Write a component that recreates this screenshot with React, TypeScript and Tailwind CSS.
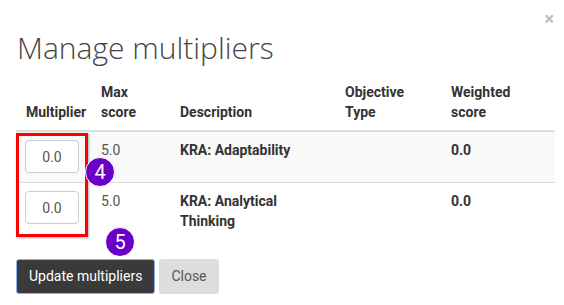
import React from 'react';

interface Row {
  maxScore: string;
  description: string;
  weighted: string;
}

const rows: Row[] = [
  { maxScore: '5.0', description: 'KRA: Adaptability', weighted: '0.0' },
  { maxScore: '5.0', description: 'KRA: Analytical Thinking', weighted: '0.0' },
];

const Badge: React.FC<{ n: number; className: string }> = ({ n, className }) => (
  <div
    className={`absolute w-[30px] h-[30px] rounded-full bg-[#6a00c8] border border-white text-white flex items-center justify-center text-[20px] leading-none ${className}`}
  >
    {n}
  </div>
);

export default function App() {
  return (
    <div className="relative w-[564px] h-[305px] bg-white overflow-hidden font-['Roboto',sans-serif] text-[14px] text-[#333]">
      <button className="absolute right-[10px] top-[10px] text-[#c0c0c0] text-[18px] leading-none font-bold">
        ×
      </button>

      <div className="px-4 pt-[28px]">
        <h1 className="font-['Open_Sans',sans-serif] font-light text-[30px] leading-[40px] text-[#444] ml-[1px]">
          Manage multipliers
        </h1>

        <table className="mt-[6px] w-[539px] border-collapse table-fixed">
          <colgroup>
            <col className="w-[77px]" />
            <col className="w-[79px]" />
            <col className="w-[165px]" />
            <col className="w-[106px]" />
            <col className="w-[112px]" />
          </colgroup>
          <thead>
            <tr className="border-b-2 border-[#ddd] text-left align-bottom">
              <th className="pl-[10px] pr-1 py-2 font-bold leading-5">Multiplier</th>
              <th className="px-2 py-2 font-bold leading-5">Max score</th>
              <th className="px-2 py-2 font-bold leading-5">Description</th>
              <th className="px-2 py-2 font-bold leading-5">Objective Type</th>
              <th className="px-2 py-2 font-bold leading-5">Weighted score</th>
            </tr>
          </thead>
          <tbody>
            {rows.map((row, i) => (
              <tr key={i} className={`align-top leading-5 ${i === 0 ? 'bg-[#f9f9f9] border-b border-[#ddd]' : ''}`}>
                <td className="pl-[9px] pr-1 pt-2 pb-[9px]">
                  <input
                    readOnly
                    value="0.0"
                    className="w-[54px] h-[33px] border border-[#ccc] rounded-[4px] bg-white text-center text-[#555] text-[14px] outline-none"
                  />
                </td>
                <td className="px-2 py-2 text-[#555]">{row.maxScore}</td>
                <td className="px-2 py-2 font-bold">{row.description}</td>
                <td className="px-2 py-2"></td>
                <td className="px-2 py-2 font-bold">{row.weighted}</td>
              </tr>
            ))}
          </tbody>
        </table>

        <div className="mt-[20px] flex gap-1">
          <button className="h-[35px] px-[12px] rounded-[3px] bg-[#3a3a3a] border border-[#8ab4e8] text-white text-[14px]">
            Update multipliers
          </button>
          <button className="h-[35px] px-[12px] rounded-[3px] bg-[#ddd] text-[#555] text-[14px]">
            Close
          </button>
        </div>
      </div>

      {/* annotation overlays */}
      <div className="absolute left-[16px] top-[133px] w-[72px] h-[104px] border-[3px] border-[#f00] shadow-[1px_1px_2px_rgba(0,0,0,0.3)]" />
      <Badge n={4} className="left-[85px] top-[157px]" />
      <Badge n={5} className="left-[105px] top-[227px]" />
    </div>
  );
}
